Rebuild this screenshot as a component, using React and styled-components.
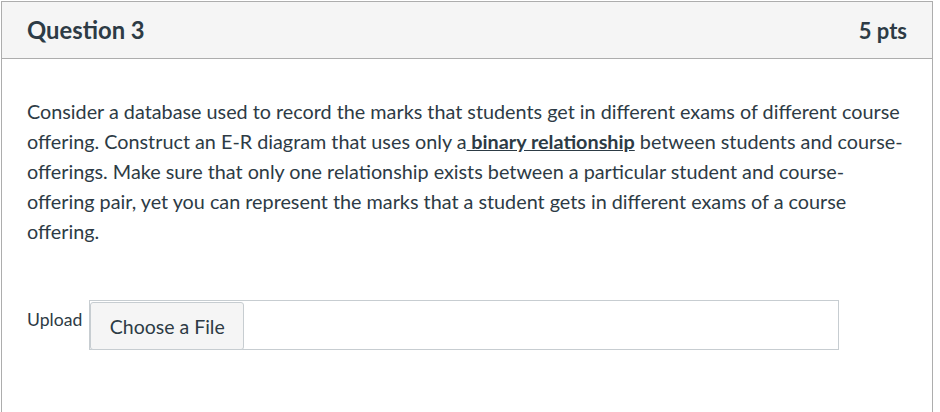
import React from "react";
import styled, { createGlobalStyle } from "styled-components";

const Global = createGlobalStyle`
  html, body { margin: 0; padding: 0; background: #fff; }
  body { font-family: Lato, "Noto Sans", sans-serif; color: #2d3b45; }
`;

const Page = styled.div`
  padding: 1px 0 0 1px;
  width: 932px;
`;

const Card = styled.div`
  border: 1px solid #adadad;
  border-bottom: none;
  height: 440px;
  box-sizing: border-box;
  background: #fff;
`;

const Header = styled.div`
  display: flex;
  justify-content: space-between;
  align-items: center;
  height: 56px;
  padding: 0 25px 0 25px;
  background: #f5f5f5;
  border-bottom: 1px solid #adadad;
`;

const Title = styled.h2`
  margin: 0;
  font-size: 23.8px;
  font-weight: 700;
  color: #2d3b45;
`;

const Points = styled.span`
  font-size: 22px;
  font-weight: 700;
  color: #2d3b45;
`;

const Body = styled.div`
  padding: 37px 24px 0 25px;
`;

const Text = styled.p`
  margin: 0;
  font-size: 19.8px;
  line-height: 30px;
  color: #2d3b45;
`;

const Link = styled.a`
  font-weight: 700;
  color: #2d3b45;
  text-decoration: underline;
`;

const UploadRow = styled.div`
  display: flex;
  align-items: flex-start;
  gap: 7px;
  margin-top: 54px;
`;

const Label = styled.span`
  font-size: 17.6px;
  line-height: 20px;
  margin-top: 10px;
`;

const FileBox = styled.div`
  width: 750px;
  height: 50px;
  box-sizing: border-box;
  border: 1px solid #c7cdd1;
  display: flex;
  align-items: flex-start;
`;

const FileButton = styled.button`
  margin: 1px 0 0 0;
  width: 154px;
  height: 48px;
  box-sizing: border-box;
  background: #f5f5f5;
  border: 1px solid #c7cdd1;
  border-radius: 3px;
  font-family: Lato, "Noto Sans", sans-serif;
  font-size: 19.5px;
  color: #2d3b45;
  padding: 0;
`;

export default function App() {
  return (
    <>
      <Global />
      <Page>
        <Card>
          <Header>
            <Title>Question 3</Title>
            <Points>5 pts</Points>
          </Header>
          <Body>
            <Text>
              Consider a database used to record the marks that students get in different exams of different course
              offering. Construct an E-R diagram that uses only a<Link> binary relationship</Link> between students and
              course-offerings. Make sure that only one relationship exists between a particular student and
              course-offering pair, yet you can represent the marks that a student gets in different exams of a course
              offering.
            </Text>
            <UploadRow>
              <Label>Upload</Label>
              <FileBox>
                <FileButton>Choose a File</FileButton>
              </FileBox>
            </UploadRow>
          </Body>
        </Card>
      </Page>
    </>
  );
}
